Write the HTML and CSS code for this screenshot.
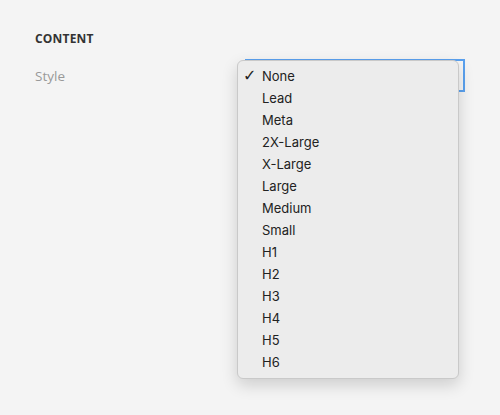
FILE: index.html
```html
<!DOCTYPE html>
<html>
<head>
  <meta charset="utf-8">
  <title>Content settings</title>
  <link rel="stylesheet" href="styles.css">
</head>
<body>
<div class="panel">
  <h3 class="panel__title">Content</h3>
  <div class="field">
    <label class="field__label">Style</label>
    <div class="field__control">
      <div class="select"><span class="select__arrow"></span></div>
      <ul class="menu">
        <li class="menu__item menu__item_checked">None</li>
        <li class="menu__item">Lead</li>
        <li class="menu__item">Meta</li>
        <li class="menu__item">2X-Large</li>
        <li class="menu__item">X-Large</li>
        <li class="menu__item">Large</li>
        <li class="menu__item">Medium</li>
        <li class="menu__item">Small</li>
        <li class="menu__item">H1</li>
        <li class="menu__item">H2</li>
        <li class="menu__item">H3</li>
        <li class="menu__item">H4</li>
        <li class="menu__item">H5</li>
        <li class="menu__item">H6</li>
      </ul>
    </div>
  </div>
</div>
</body>
</html>
```
FILE: styles.css
```css
html, body {
  margin: 0;
  min-height: 100%;
  height: 100%;
  background: #f4f4f4;
  font-family: "Open Sans", sans-serif;
}

.panel {
  min-height: 415px;
  box-sizing: border-box;
  padding: 31px 35px 0 35px;
}

.panel__title {
  margin: 0 0 12px;
  font-size: 12px;
  line-height: 16px;
  font-weight: 700;
  text-transform: uppercase;
  color: #333;
  letter-spacing: 0.2px;
}

.field {
  display: grid;
  grid-template-columns: 210px 1fr;
  align-items: center;
}

.field__label {
  font-size: 13.5px;
  color: #999;
}

.field__control {
  position: relative;
}

.select {
  height: 29px;
  border: 2px solid #5aa1ef;
  background: #f6f6f6;
  position: relative;
}

.select__arrow {
  position: absolute;
  right: 4px;
  top: 12px;
  width: 2px;
  height: 4px;
  background: #999;
}

/* native-looking popup list */
.menu {
  position: absolute;
  left: -8px;
  top: 1px;
  width: 222px;
  margin: 0;
  padding: 4px 0 5px;
  list-style: none;
  box-sizing: border-box;
  background: #ececec;
  border: 1px solid #c9c9c9;
  border-radius: 6px;
  box-shadow: 0 6px 16px rgba(0, 0, 0, 0.16);
  font-family: Inter, "Liberation Sans", sans-serif;
  font-size: 13px;
  color: #222;
}

.menu__item {
  position: relative;
  height: 22px;
  line-height: 22px;
  padding-left: 24px;
}

.menu__item_checked::before {
  content: "\2713";
  position: absolute;
  left: 5px;
  font-size: 16px;
  font-family: "DejaVu Sans", sans-serif;
}
```
